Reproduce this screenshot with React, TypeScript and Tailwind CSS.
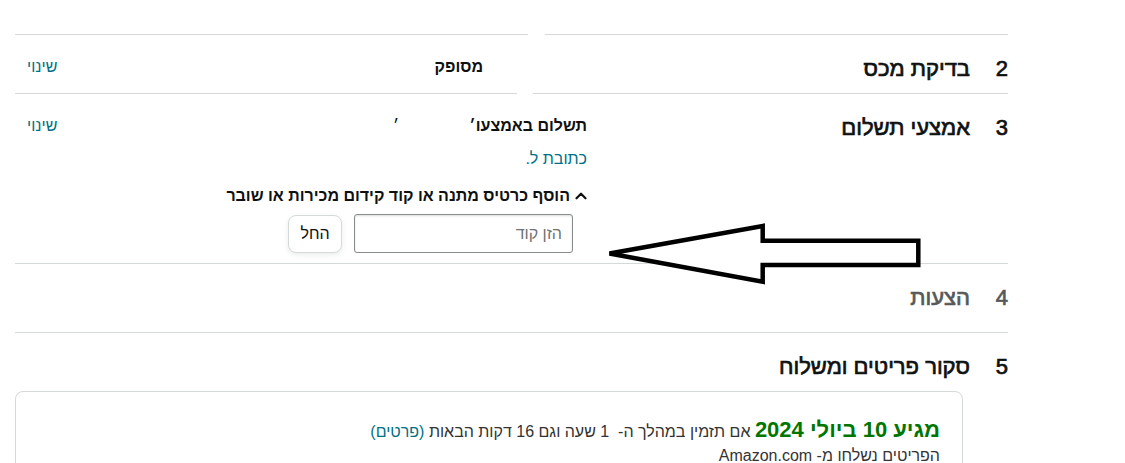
import { ChevronUp } from 'lucide-react';

const font = 'font-["Liberation_Sans",Arial,"DejaVu_Sans",sans-serif]';

function StepTitle({ num, title, muted = false }: { num: string; title: string; muted?: boolean }) {
  const color = muted ? 'text-[#565959]' : 'text-[#0f1111]';
  const cls = `shrink-0 pt-[20px] text-[22px] leading-[28px] font-normal [-webkit-text-stroke:0.7px_currentColor] ${color}`;
  return (
    <>
      <div className={`w-[38px] ${cls}`}>{num}</div>
      <div className={`w-[383px] ${cls}`}>{title}</div>
    </>
  );
}

function ChangeLink() {
  return <a className="text-[16px] leading-[20px] text-[#007185]">שינוי</a>;
}

export default function App() {
  return (
    <div dir="rtl" className={`relative w-[1125px] h-[463px] overflow-hidden bg-white pl-[15px] pr-[117px] text-[#0f1111] ${font}`}>
      <div className="h-[34px]" />

      {/* 2 */}
      <section className="h-[59px] border-t border-[#d5d9d9] flex">
        <StepTitle num="2" title="בדיקת מכס" />
        <div className="flex-1 pt-[22px] pl-[12px] flex justify-between text-[16px] leading-[20px]">
          <span className="font-bold pr-[104px]">מסופק</span>
          <ChangeLink />
        </div>
      </section>

      {/* 3 */}
      <section className="border-t border-[#d5d9d9] flex pb-[10px]">
        <StepTitle num="3" title="אמצעי תשלום" />
        <div className="flex-1 pt-[22px] pl-[12px] text-[16px] leading-[20px]">
          <div className="flex justify-between">
            <span className="font-bold">
              תשלום באמצעו<span>׳</span>
              <span className="mr-[70px] font-normal">׳</span>
            </span>
            <ChangeLink />
          </div>
          <div className="mt-[13px] text-[#007185]">כתובת ל.</div>
          <div className="mt-[17px] flex items-center gap-[2px] font-bold">
            <ChevronUp size={18} strokeWidth={3} className="text-[#0f1111] -mr-[3px]" />
            <span>הוסף כרטיס מתנה או קוד קידום מכירות או שובר</span>
          </div>
          <div className="mt-[8px] pr-[14px] flex items-center gap-[12px]">
            <input
              placeholder="הזן קוד"
              className="w-[219px] h-[39px] rounded-[3px] border border-[#888c8c] px-[10px] text-[16px] placeholder:text-[#6f7373] shadow-[inset_0_1px_2px_rgba(15,17,17,0.15)] outline-none"
            />
            <button className="w-[54px] h-[38px] rounded-[8px] border border-[#d5d9d9] bg-white text-[16px] text-[#0f1111] shadow-[0_2px_5px_rgba(213,217,217,0.5)]">
              החל
            </button>
          </div>
        </div>
      </section>

      {/* 4 */}
      <section className="h-[69px] border-t border-[#d5d9d9] flex">
        <StepTitle num="4" title="הצעות" muted />
      </section>

      {/* 5 */}
      <section className="border-t border-[#d5d9d9]">
        <div className="flex">
          <StepTitle num="5" title="סקור פריטים ומשלוח" />
        </div>
        <div className="mt-[10px] mr-[45px] h-[120px] rounded-[8px] border border-[#d5d9d9] pt-[24px] pr-[22px]">
          <div className="leading-[28px]">
            <span className="text-[22px] font-bold text-[#007600]">מגיע 10 ביולי 2024</span>
            <span className="text-[16px] text-[#333]"> אם תזמין במהלך ה-&nbsp; 1 שעה וגם 16 דקות הבאות </span>
            <a className="text-[16px] text-[#007185]">(פרטים)</a>
          </div>
          <div className="text-[16px] leading-[20px] text-[#333]">הפריטים נשלחו מ- Amazon.com</div>
        </div>
      </section>

      {/* whited-out bits over the dividers */}
      <div className="absolute left-[528px] top-[30px] w-[17px] h-[8px] bg-white" />
      <div className="absolute left-[517px] top-[89px] w-[16px] h-[8px] bg-white" />

      {/* annotation arrow */}
      <svg className="absolute left-[600px] top-[220px]" width="330" height="70" viewBox="0 0 330 70">
        <path
          d="M9.5 33.5 L162.7 6 L162.7 20.7 L318.3 20.7 L318.3 45 L162.7 45 L162.7 61.7 Z"
          fill="white"
          stroke="black"
          strokeWidth="4.5"
          strokeLinejoin="miter"
          strokeMiterlimit="3"
        />
      </svg>
    </div>
  );
}
